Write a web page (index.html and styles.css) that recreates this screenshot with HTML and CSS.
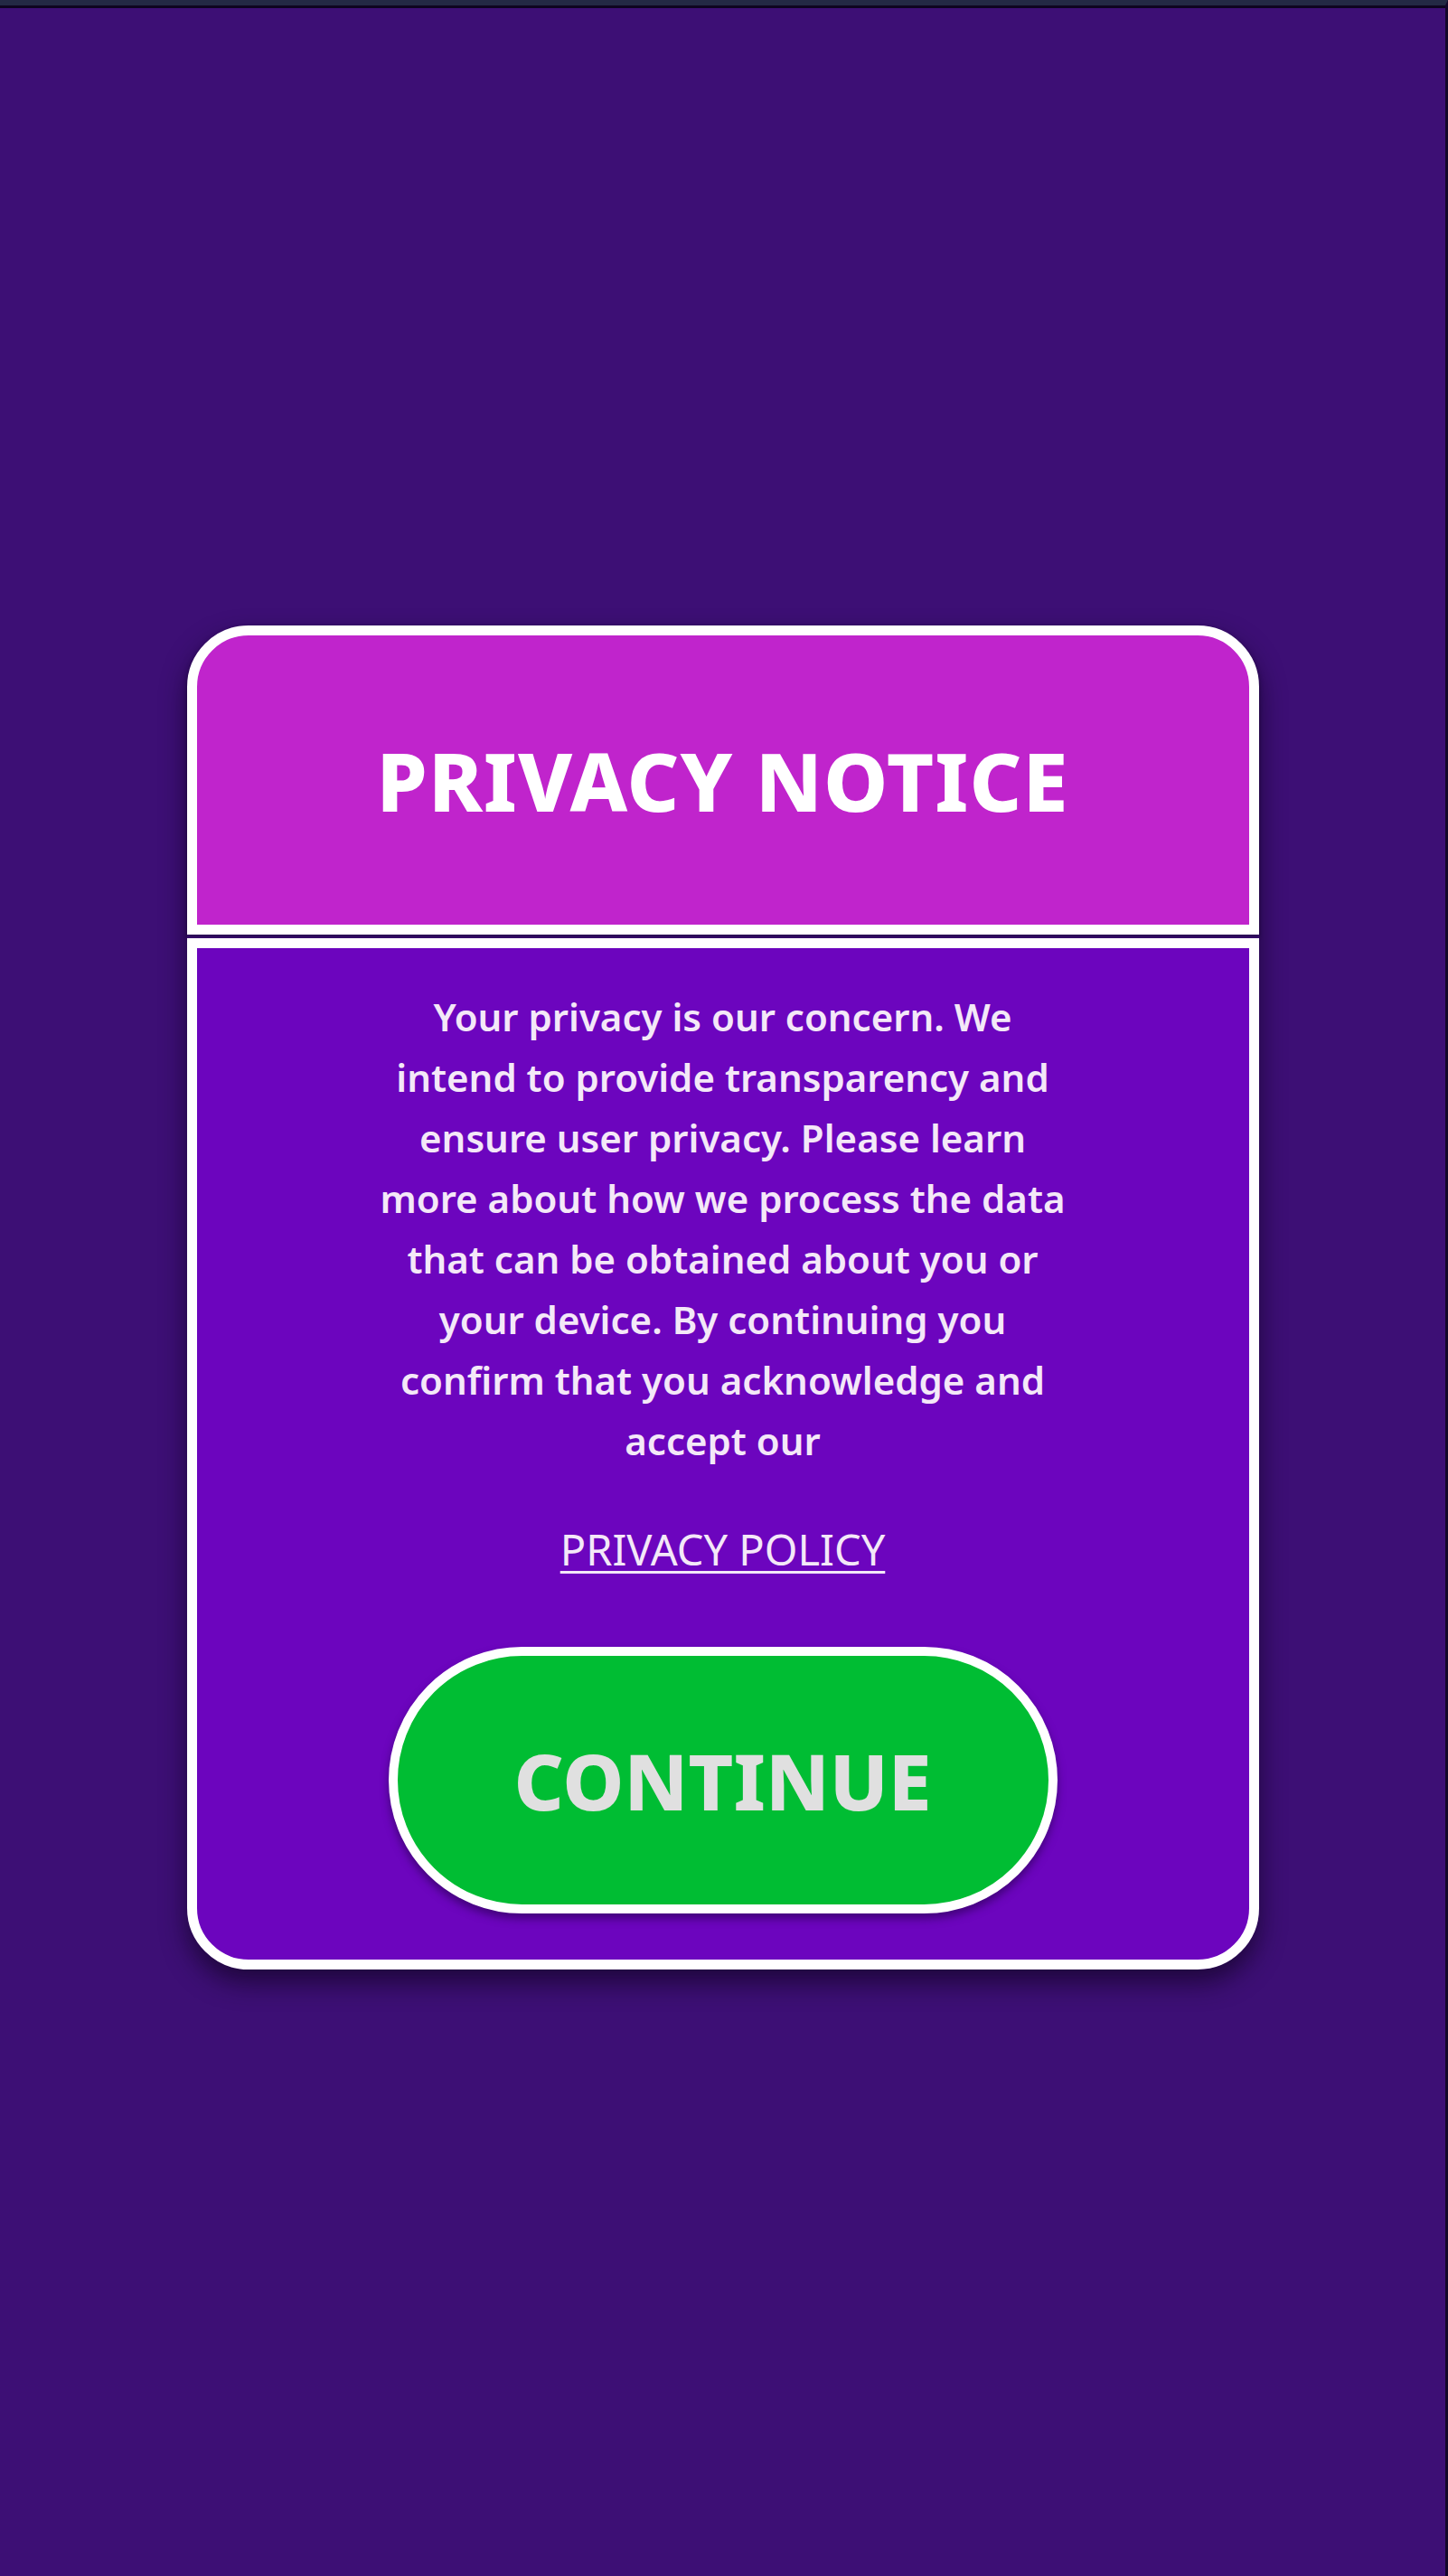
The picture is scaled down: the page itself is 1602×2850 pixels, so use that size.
FILE: index.html
```html
<!DOCTYPE html>
<html lang="en">
<head>
    <meta charset="UTF-8">
    <meta name="viewport" content="width=device-width, initial-scale=1.0">
    <title>Privacy Notice</title>
    <link rel="stylesheet" href="styles.css">
</head>
<body>

<div class="screen">
    <div class="notice">
        <header class="notice-head">
            <h1>PRIVACY NOTICE</h1>
        </header>
        <div class="notice-body">
            <p class="notice-text">Your privacy is our concern. We intend to provide transparency and ensure user privacy. Please learn more about how we process the data that can be obtained about you or your device. By continuing you confirm that you acknowledge and accept our</p>
            <a class="policy-link" href="#">PRIVACY POLICY</a>
            <button class="btn-continue">CONTINUE</button>
        </div>
    </div>
</div>

</body>
</html>
```

FILE: styles.css
```css
html, body {
    margin: 0;
    padding: 0;
}
body {
    font-family: "Noto Sans", "Open Sans", sans-serif;
    background-color: #3d0f75;
}
.screen {
    box-sizing: border-box;
    min-height: 100vh;
    border-top: 6px solid #232944;
    border-right: 3px solid #14062a;
    box-shadow: inset 0 3px 0 #0e0520;
    display: flex;
    align-items: center;
    justify-content: center;
    padding-top: 15px;
}
.notice {
    width: 1186px;
    display: flex;
    flex-direction: column;
    gap: 4px;
    border-radius: 68px;
    box-shadow: 0 14px 28px rgba(20, 4, 40, 0.75);
}
.notice-head {
    box-sizing: border-box;
    height: 342px;
    background-color: #c024cc;
    border: 11px solid #ffffff;
    border-radius: 68px 68px 0 0;
    display: flex;
    align-items: center;
    justify-content: center;
    box-shadow: 0 2px 4px rgba(20, 4, 40, 0.6);
}
.notice-head h1 {
    margin: 0;
    color: #ffffff;
    font-size: 90px;
    font-weight: 800;
    letter-spacing: 1px;
}
.notice-body {
    box-sizing: border-box;
    height: 1141px;
    background-color: #6c05be;
    border: 11px solid #ffffff;
    border-radius: 0 0 68px 68px;
    display: flex;
    flex-direction: column;
    align-items: center;
    padding: 42px 0 0;
}
.notice-text {
    margin: 0;
    width: 775px;
    color: #f4e8f8;
    font-size: 42px;
    font-weight: 600;
    line-height: 67px;
    text-align: center;
}
.policy-link {
    margin-top: 54px;
    color: #f4e8f8;
    font-size: 47px;
    line-height: 67px;
    text-decoration: underline;
    text-decoration-thickness: 3px;
    text-underline-offset: 6px;
}
.btn-continue {
    margin-top: 74px;
    box-sizing: border-box;
    width: 740px;
    height: 295px;
    background-color: #00bd33;
    color: #e0e0e0;
    border: 10px solid #ffffff;
    border-radius: 150px;
    font-family: inherit;
    font-size: 86px;
    font-weight: 800;
    cursor: pointer;
    box-shadow: 0 6px 10px rgba(40, 0, 80, 0.6);
}
```
